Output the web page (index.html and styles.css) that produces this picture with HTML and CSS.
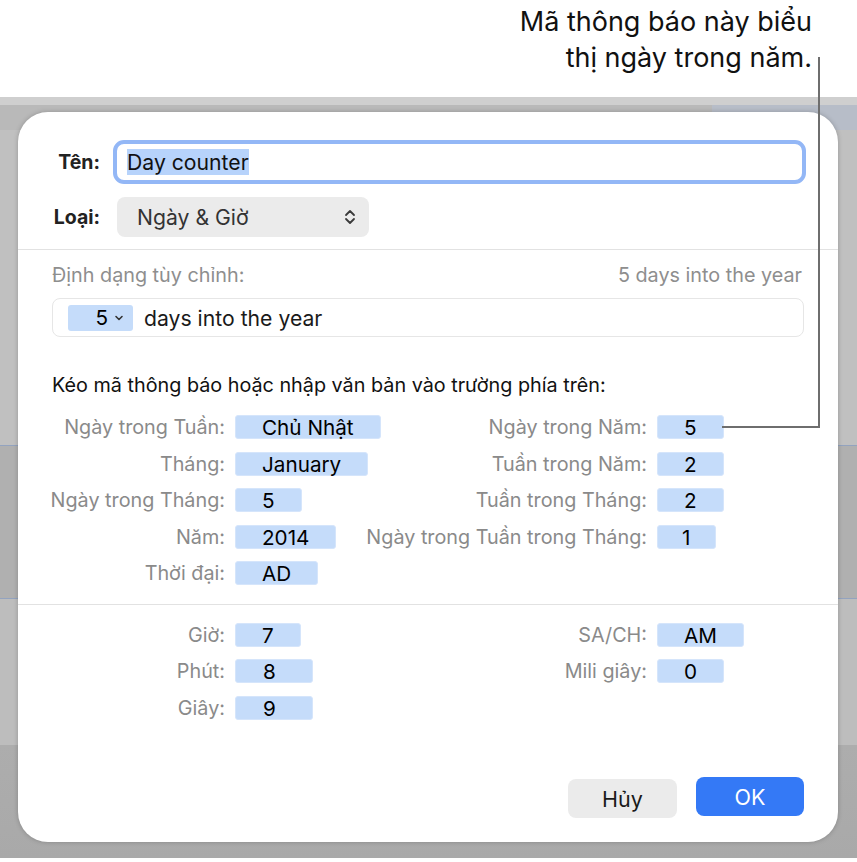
FILE: index.html
```html
<!DOCTYPE html>
<html lang="vi">
<head>
<meta charset="utf-8">
<title>Day counter</title>
<link rel="stylesheet" href="styles.css">
</head>
<body>
<div class="page">
  <header class="callout">
    <p class="callout-text">Mã thông báo này biểu<br>thị ngày trong năm.</p>
  </header>

  <div class="app">
    <div class="dialog">
      <div class="top">
        <span class="flabel">Tên:</span>
        <div class="textfield"><span class="sel">Day counter</span></div>
        <span class="flabel">Loại:</span>
        <div class="popup">
          <span>Ngày &amp; Giờ</span>
          <svg class="updown" width="12" height="16" viewBox="0 0 12 16"><path d="M2 6 L6 2 L10 6 M2 10 L6 14 L10 10" fill="none" stroke="#3a3a3a" stroke-width="1.8" stroke-linecap="round" stroke-linejoin="round"/></svg>
        </div>
      </div>

      <div class="sep"></div>

      <div class="format">
        <div class="fmt-head"><span>Định dạng tùy chỉnh:</span><span>5 days into the year</span></div>
        <div class="fmt-field">
          <span class="token tok-pop">5<svg width="10" height="8" viewBox="0 0 10 8"><path d="M2 2.5 L5 5.5 L8 2.5" fill="none" stroke="#333" stroke-width="1.6" stroke-linecap="round" stroke-linejoin="round"/></svg></span>
          <span class="fmt-text">days into the year</span>
        </div>
        <p class="hint">Kéo mã thông báo hoặc nhập văn bản vào trường phía trên:</p>
      </div>

      <div class="grid">
        <span class="lbl">Ngày trong Tuần:</span><span class="token">Chủ Nhật</span>
        <span class="lbl">Ngày trong Năm:</span><span class="token">5</span>
        <span class="lbl">Tháng:</span><span class="token">January</span>
        <span class="lbl">Tuần trong Năm:</span><span class="token">2</span>
        <span class="lbl">Ngày trong Tháng:</span><span class="token">5</span>
        <span class="lbl">Tuần trong Tháng:</span><span class="token">2</span>
        <span class="lbl">Năm:</span><span class="token">2014</span>
        <span class="lbl">Ngày trong Tuần trong Tháng:</span><span class="token narrow">1</span>
        <span class="lbl">Thời đại:</span><span class="token">AD</span>
      </div>

      <div class="sep"></div>

      <div class="grid time">
        <span class="lbl">Giờ:</span><span class="token">7</span>
        <span class="lbl">SA/CH:</span><span class="token">AM</span>
        <span class="lbl">Phút:</span><span class="token wide">8</span>
        <span class="lbl">Mili giây:</span><span class="token">0</span>
        <span class="lbl">Giây:</span><span class="token wide">9</span>
      </div>

      <div class="buttons">
        <button class="btn btn-cancel">Hủy</button>
        <button class="btn btn-ok">OK</button>
      </div>
    </div>
  </div>

  <svg class="leader" width="857" height="862" viewBox="0 0 857 862"><polyline points="819,57 819,427 722,427" fill="none" stroke="#6e6e6e" stroke-width="2"/></svg>
</div>
</body>
</html>
```

FILE: styles.css
```css
* { box-sizing: border-box; }
html, body { margin: 0; padding: 0; background: #fff; }
body {
  font-family: "Inter", "Noto Sans", "Liberation Sans", sans-serif;
  color: #1d1d1d;
}
.page {
  position: relative;
  width: 857px;
  height: 862px;
  overflow: hidden;
}

/* callout */
.callout {
  height: 97px;
  padding: 4px 45px 0 0;
}
.callout-text {
  margin: 0;
  text-align: right;
  font-size: 27px;
  line-height: 36px;
  color: #111;
}

/* background app window */
.app {
  height: 761px;
  padding: 15px 19px 0 18px;
  background:
    linear-gradient(#b7bdc8, #b7bdc8) no-repeat right 0 top 8px / 145px 25px,
    linear-gradient(#cfcfcf 0, #cfcfcf 8px, #b9b9b9 8px, #b9b9b9 33px, #c0c0c0 33px, #c0c0c0 348px, #93a3bf 348px, #93a3bf 349px, #b0b0b0 349px, #b0b0b0 501px, #93a3bf 501px, #93a3bf 502px, #bdbdbd 502px, #bdbdbd 648px, #adadad 648px, #a9a9a9 100%);
}
.dialog {
  width: 820px;
  height: 730px;
  background: #fff;
  border-radius: 30px;
  box-shadow: 0 0 5px rgba(0, 0, 0, 0.22);
  display: flex;
  flex-direction: column;
}

/* top: name and type */
.top {
  display: grid;
  grid-template-columns: 82px 1fr;
  column-gap: 13px;
  row-gap: 13px;
  align-items: center;
  padding: 28px 32px 0 0;
}
.flabel {
  text-align: right;
  font-weight: 700;
  font-size: 19.5px;
  color: #222;
}
.textfield {
  height: 44px;
  border: 4px solid #93b7f6;
  border-radius: 11px;
  padding: 0 6px 0 10px;
  display: flex;
  align-items: center;
  font-size: 21.2px;
  color: #111;
}
.sel { background: #b7d3fb; line-height: 26px; }
.popup {
  margin-left: 4px;
  width: 252px;
  height: 40px;
  background: #ebebeb;
  border-radius: 8px;
  display: flex;
  align-items: center;
  justify-content: space-between;
  padding: 0 13px 0 20px;
  font-size: 21.2px;
  color: #333;
}

.sep {
  height: 1px;
  background: #e2e2e2;
  margin-top: 12px;
}

/* custom format */
.format {
  padding: 14px 34px 0 34px;
}
.fmt-head {
  display: flex;
  justify-content: space-between;
  font-size: 19.8px;
  line-height: 22px;
  color: #8e8e8e;
  padding-right: 2px;
}
.fmt-field {
  margin-top: 12px;
  height: 39px;
  border: 1px solid #e6e6e6;
  border-radius: 8px;
  display: flex;
  align-items: center;
  gap: 11px;
  padding-left: 15px;
  font-size: 21.2px;
  color: #1a1a1a;
}
.hint {
  margin: 37px 0 0;
  font-size: 19.8px;
  line-height: 22px;
  color: #111;
}

/* token grid */
.grid {
  display: grid;
  grid-template-columns: 207px 120px 282px 1fr;
  column-gap: 10px;
  grid-auto-rows: 36.5px;
  align-items: center;
  margin-top: 13px;
}
.grid.time { margin-top: 12px; }
.lbl {
  text-align: right;
  font-size: 19.8px;
  color: #8a8a8a;
  white-space: nowrap;
}
.token {
  justify-self: start;
  white-space: nowrap;
  height: 24px;
  line-height: 24px;
  padding: 0 26px;
  background: #c5dcfa;
  border: 1px solid #d5e5fb;
  border-radius: 3px;
  font-size: 20.7px;
  color: #000;
  text-align: center;
}
.token.narrow { padding: 0 25px 0 24px; }
.token.wide { min-width: 78px; text-align: left; padding-left: 27px; }
.tok-pop {
  height: 26px;
  width: 65px;
  display: flex;
  align-items: center;
  justify-content: flex-end;
  gap: 6px;
  padding: 0 9px 0 0;
  border: none;
}

/* buttons */
.buttons {
  margin-top: auto;
  padding: 0 34px 24px 0;
  display: flex;
  justify-content: flex-end;
  align-items: center;
  gap: 19px;
}
.btn {
  font-family: inherit;
  font-size: 21.5px;
  height: 39px;
  width: 109px;
  border: none;
  border-radius: 8px;
}
.btn-cancel { background: #ebebeb; color: #1a1a1a; margin-top: 4px; }
.btn-ok { background: #3479f6; color: #fff; width: 108px; }

.leader {
  position: absolute;
  left: 0;
  top: 0;
  pointer-events: none;
}
```
